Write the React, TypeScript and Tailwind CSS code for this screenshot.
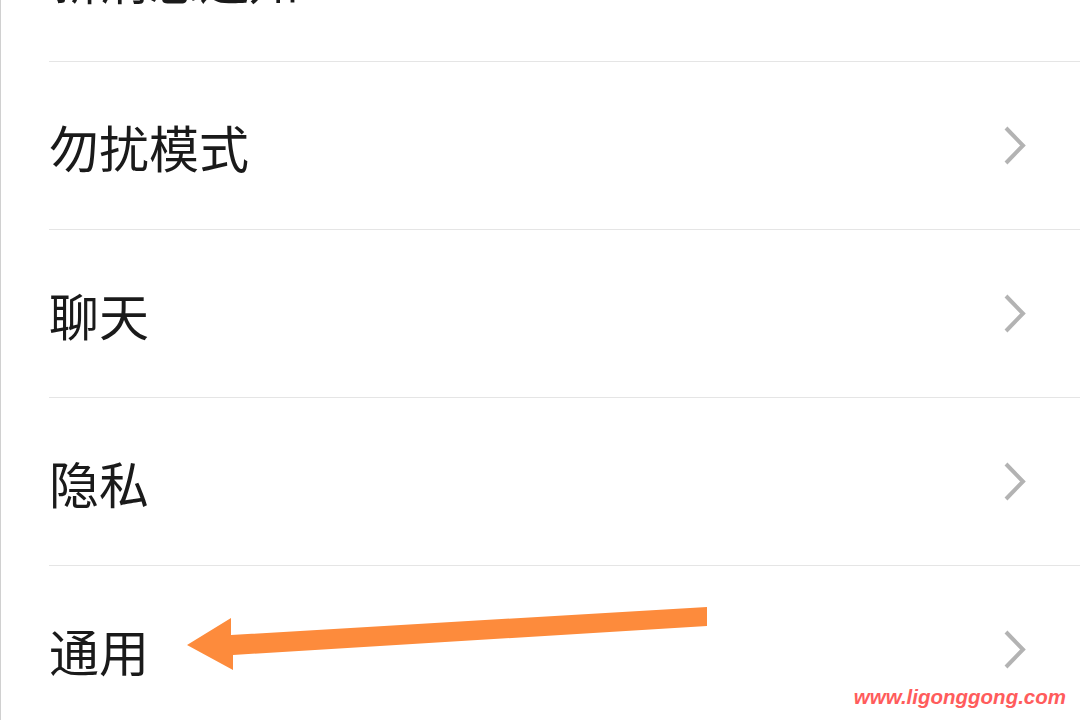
import { FC } from 'react';

const items = ['新消息通知', '勿扰模式', '聊天', '隐私', '通用'];

const Chevron: FC = () => (
  <svg width="26" height="42" viewBox="0 0 26 42" className="mt-[2px] shrink-0">
    <path
      d="M4 2 L21 19.5 L4 37"
      fill="none"
      stroke="#b3b3b3"
      strokeWidth="4"
      strokeLinecap="butt"
      strokeLinejoin="miter"
    />
  </svg>
);

const SettingRow: FC<{ label: string; first?: boolean }> = ({ label, first }) => (
  <div className={`ml-[48px] flex h-[168px] items-center justify-between border-b border-[#e5e5e5] pr-[52px] ${first ? '-mt-[106px]' : ''}`}>
    <span className="text-[50px] leading-none text-[#1a1a1a] [font-family:'Noto_Sans_CJK_SC',sans-serif]">
      {label}
    </span>
    <Chevron />
  </div>
);

const App: FC = () => {
  return (
    <div className="relative h-[720px] w-[1080px] overflow-hidden border-l border-[#d0d0d0] bg-white">
      {items.map((label, i) => (
        <SettingRow key={label} label={label} first={i === 0} />
      ))}

      {/* annotation arrow */}
      <svg className="absolute left-0 top-0" width="1080" height="720" viewBox="0 0 1080 720">
        <polygon
          points="706,607 706,626 232,655 232,670 186,645 230,618 230,635"
          fill="#fd8b3c"
        />
      </svg>

      <span className="absolute bottom-[13px] right-[14px] text-[20.5px] font-bold italic leading-none text-[#ff5c5c] [font-family:'Liberation_Sans',sans-serif]">
        www.ligonggong.com
      </span>
    </div>
  );
};

export default App;
